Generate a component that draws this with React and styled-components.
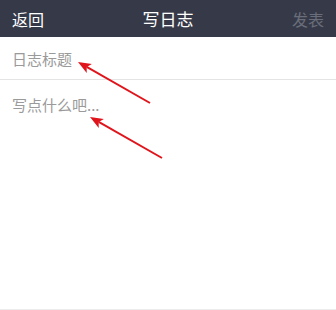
import React from "react";
import styled, { createGlobalStyle } from "styled-components";

const GlobalStyle = createGlobalStyle`
  html, body { margin: 0; padding: 0; background: #fff; }
  body { font-family: "Noto Sans CJK SC", "Noto Sans", sans-serif; }
  * { box-sizing: border-box; }
`;

const Page = styled.div`
  position: relative;
  width: 336px;
  height: 310px;
  display: flex;
  flex-direction: column;
  background: #fff;
  overflow: hidden;
`;

const NavBar = styled.div`
  height: 37px;
  background: #363a48;
  display: flex;
  align-items: center;
  justify-content: space-between;
  padding: 0 12px;
  position: relative;
`;

const NavButton = styled.span`
  font-size: 16px;
  color: ${({ disabled }) => (disabled ? "#6a6e7b" : "#ffffff")};
`;

const NavTitle = styled.span`
  position: absolute;
  left: 50%;
  transform: translateX(-50%);
  font-size: 17px;
  color: #fff;
`;

const TitleInput = styled.input`
  height: 43px;
  border: none;
  border-bottom: 1px solid #e4e4e4;
  outline: none;
  padding: 0 12px;
  font-family: inherit;
  font-size: 15px;
  color: #333;
  &::placeholder { color: #9a9a9a; }
`;

const Body = styled.textarea`
  flex: 1;
  border: none;
  border-bottom: 1px solid #ececec;
  outline: none;
  resize: none;
  padding: 14px 12px;
  font-family: inherit;
  font-size: 15px;
  line-height: 22px;
  color: #333;
  &::placeholder { color: #9a9a9a; }
`;

const Arrows = styled.svg`
  position: absolute;
  left: 0;
  top: 0;
  pointer-events: none;
`;

const Arrow = ({ x1, y1, x2, y2 }) => {
  const a = Math.atan2(y1 - y2, x1 - x2);
  const len = 14, w = 0.38;
  const p1 = [x2 + len * Math.cos(a + w), y2 + len * Math.sin(a + w)];
  const p2 = [x2 + len * Math.cos(a - w), y2 + len * Math.sin(a - w)];
  const m = [x2 + 10 * Math.cos(a), y2 + 10 * Math.sin(a)];
  return (
    <g>
      <line x1={x1} y1={y1} x2={m[0]} y2={m[1]} stroke="#e0141b" strokeWidth="2" />
      <polygon points={`${x2},${y2} ${p1.join(",")} ${m.join(",")} ${p2.join(",")}`} fill="#e0141b" />
    </g>
  );
};

export default function App() {
  return (
    <>
      <GlobalStyle />
      <Page>
        <NavBar>
          <NavButton>返回</NavButton>
          <NavTitle>写日志</NavTitle>
          <NavButton disabled>发表</NavButton>
        </NavBar>
        <TitleInput placeholder="日志标题" />
        <Body placeholder="写点什么吧..." />
        <Arrows width="336" height="310">
          <Arrow x1={150} y1={103} x2={78} y2={62} />
          <Arrow x1={162} y1={158} x2={90} y2={117} />
        </Arrows>
      </Page>
    </>
  );
}
